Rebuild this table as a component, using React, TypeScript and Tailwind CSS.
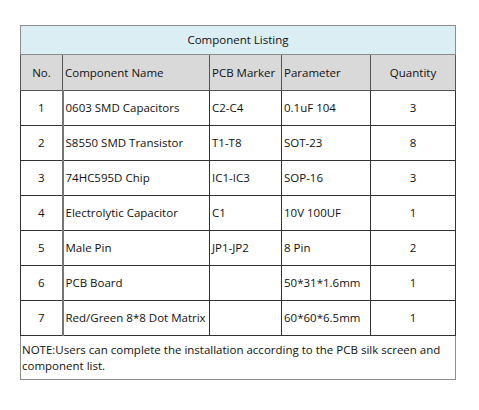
import React from 'react';

// Component listing table
const rows = [
  { no: 1, name: '0603 SMD Capacitors', marker: 'C2-C4', param: '0.1uF 104', qty: 3 },
  { no: 2, name: 'S8550 SMD Transistor', marker: 'T1-T8', param: 'SOT-23', qty: 8 },
  { no: 3, name: '74HC595D Chip', marker: 'IC1-IC3', param: 'SOP-16', qty: 3 },
  { no: 4, name: 'Electrolytic Capacitor', marker: 'C1', param: '10V 100UF', qty: 1 },
  { no: 5, name: 'Male Pin', marker: 'JP1-JP2', param: '8 Pin', qty: 2 },
  { no: 6, name: 'PCB Board', marker: '', param: '50*31*1.6mm', qty: 1 },
  { no: 7, name: 'Red/Green 8*8 Dot Matrix', marker: '', param: '60*60*6.5mm', qty: 1 },
];

export default function App() {
  return (
    <div className="w-[479px] h-[410px] bg-white pt-[25px] pl-[20px] font-['Open_Sans',sans-serif] text-[11.5px] text-[#111]">
      <table className="w-[435px] border-collapse table-fixed border border-[#8c8c8c]">
        <colgroup>
          <col className="w-[42px]" />
          <col className="w-[147px]" />
          <col className="w-[72px]" />
          <col className="w-[89px]" />
          <col className="w-[85px]" />
        </colgroup>
        <tbody>
          <tr className="h-[29px] bg-[#daeef3]">
            <td colSpan={5} className="border border-[#8c8c8c] text-center">
              Component Listing
            </td>
          </tr>
          <tr className="h-[36px] bg-[#d9d9d9]">
            <td className="border border-[#555] text-center">No.</td>
            <td className="border border-[#555] border-l-[#777] px-[2px] whitespace-nowrap">Component Name</td>
            <td className="border border-[#555] px-[2px] whitespace-nowrap">PCB Marker</td>
            <td className="border border-[#555] px-[2px]">Parameter</td>
            <td className="border border-[#555] text-center">Quantity</td>
          </tr>
          {rows.map((r) => (
            <tr key={r.no} className="h-[35px]">
              <td className="border border-[#333] text-center">{r.no}</td>
              <td className="border border-[#333] border-l-2 border-l-[#777] px-[2px] whitespace-nowrap">{r.name}</td>
              <td className="border border-[#333] px-[2px] whitespace-nowrap">{r.marker}</td>
              <td className="border border-[#333] px-[2px] whitespace-nowrap">{r.param}</td>
              <td className="border border-[#333] text-center">{r.qty}</td>
            </tr>
          ))}
          <tr className="h-[44px]">
            <td colSpan={5} className="border border-[#8c8c8c] px-[1px] leading-[16px] whitespace-nowrap">
              NOTE:Users can complete the installation according to the PCB silk screen and
              <br />
              component list.
            </td>
          </tr>
        </tbody>
      </table>
    </div>
  );
}
